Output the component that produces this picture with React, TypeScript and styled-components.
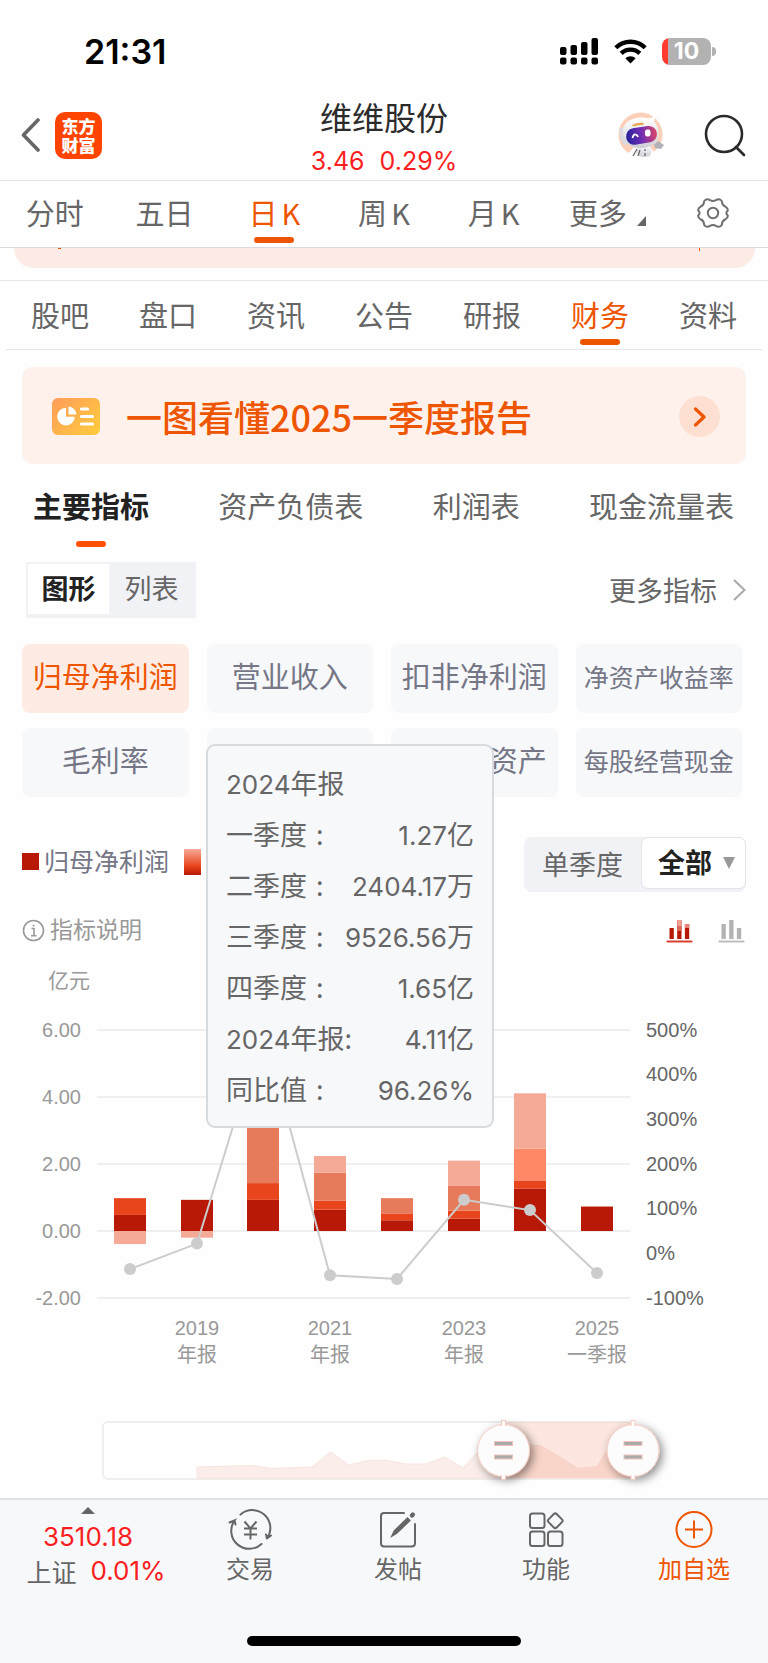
import React, { useState } from "react";
import styled, { createGlobalStyle, css } from "styled-components";

const cjk = '"Noto Sans CJK SC", sans-serif';
const numeric = '"Liberation Sans", "Noto Sans CJK SC", sans-serif';
const system = 'Inter, "Noto Sans CJK SC", sans-serif';

const color = {
  accent: "#ee5500",
  up: "#fa1e1e",
  text: "#2b2b2b",
  muted: "#666666",
  faint: "#999999",
  chip: "#757686",
  line: "#e6e6e8",
  surface: "#f7f8fa",
  segment: "#f1f2f5",
};

const GlobalStyle = createGlobalStyle`
  * { box-sizing: border-box; }
  body { margin: 0; background: #fefefe; font-family: ${cjk}; color: ${color.muted}; }
  button, select { font-family: inherit; color: inherit; background: none; border: 0; padding: 0; margin: 0; cursor: pointer; }
  a { color: inherit; text-decoration: none; }
  svg { display: block; }
`;

const Page = styled.div`
  display: flex;
  flex-direction: column;
  min-height: 100vh;
`;

/* ---------- status bar ---------- */

const StatusBar = styled.div`
  display: flex;
  align-items: center;
  justify-content: space-between;
  height: 102px;
  padding: 0 52px 0 84px;
`;

const Clock = styled.time`
  padding-top: 2px;
  font: 600 34px/40px ${system};
  color: #000;
`;

const StatusIcons = styled.div`
  display: flex;
  align-items: center;
  gap: 15px;
`;

const Battery = styled.div`
  display: flex;
  align-items: center;
  gap: 1px;
`;

const BatteryBody = styled.div`
  width: 49px;
  height: 27px;
  border-radius: 8px;
  background: linear-gradient(90deg, #ff3b30 6px, #b2b2b2 6px);
  color: #fff;
  text-align: center;
  font: 700 23px/27px ${system};
`;

const BatteryTip = styled.div`
  width: 4px;
  height: 9px;
  border-radius: 0 4px 4px 0;
  background: #b2b2b2;
`;

/* ---------- header ---------- */

const Header = styled.header`
  display: grid;
  grid-template-columns: 1fr auto 1fr;
  height: 79px;
  padding: 0 21px;
  border-bottom: 1px solid ${color.line};
`;

const HeaderSide = styled.div<{ $end?: boolean }>`
  display: flex;
  align-items: center;
  gap: ${(p) => (p.$end ? 40 : 15)}px;
  justify-content: ${(p) => (p.$end ? "flex-end" : "flex-start")};
  padding-bottom: 12px;
`;

const BrandLogo = styled.a`
  display: grid;
  place-content: center;
  width: 47px;
  height: 47px;
  border-radius: 10px;
  background: #ff4400;
  color: #fff;
  text-align: center;
  font: 900 17px/19px ${cjk};
`;

const Stock = styled.div`
  text-align: center;
`;

const StockName = styled.h1`
  margin: 0;
  font: 400 32px/28px ${cjk};
  color: ${color.text};
`;

const StockQuote = styled.div`
  display: flex;
  justify-content: center;
  gap: 15px;
  margin-top: 14px;
  font: 400 25px/34px ${system};
  color: ${color.up};
`;

/* ---------- tab bars ---------- */

const PeriodTabs = styled.nav`
  display: grid;
  grid-template-columns: repeat(7, 1fr);
  height: 67px;
  border-bottom: 1px solid #d9dadd;
`;

const SectionFrame = styled.div`
  margin-top: 12px;
  padding: 0 6px;
  border-top: 1px solid ${color.line};
`;

const SectionTabs = styled.nav`
  display: grid;
  grid-template-columns: repeat(7, 1fr);
  height: 69px;
  border-bottom: 1px solid ${color.line};
`;

const Tab = styled.button<{ $active?: boolean }>`
  display: flex;
  flex-direction: column;
  align-items: center;
  justify-content: flex-end;
  gap: 5px;
  padding-bottom: 4px;
  font-size: 29px;
  line-height: 40px;
  color: ${(p) => (p.$active ? color.accent : color.muted)};
  &::after {
    content: "";
    width: 40px;
    height: 6px;
    border-radius: 3px;
    background: ${(p) => (p.$active ? color.accent : "transparent")};
  }
`;

const MoreTab = styled(Tab)`
  padding-left: 8px;
`;

const TabLabel = styled.span`
  display: flex;
  gap: 4px;
`;

const CornerMark = styled.svg`
  align-self: flex-end;
  margin: 0 0 6px 6px;
`;

const SettingsButton = styled.button`
  display: grid;
  place-items: center;
  padding-bottom: 2px;
`;

const PeekCard = styled.div`
  display: flex;
  justify-content: space-between;
  height: 20px;
  margin: 0 13px 0 14px;
  padding: 0 55px 0 44px;
  border-radius: 0 0 27px 27px;
  background: #fdece6;
`;

const PeekMark = styled.i<{ $tall?: boolean }>`
  width: ${(p) => (p.$tall ? 1 : 3)}px;
  height: ${(p) => (p.$tall ? 3 : 1)}px;
  background: ${color.accent};
`;

/* ---------- banner ---------- */

const Banner = styled.a`
  display: flex;
  align-items: center;
  height: 97px;
  margin: 17px 22px 0;
  padding: 2px 26px 0 30px;
  border-radius: 10px;
  background: #fef1eb;
  color: ${color.accent};
`;

const BannerTitle = styled.span`
  flex: 1;
  padding: 0 0 2px 26px;
  font: 500 36px/48px ${cjk};
`;

const BannerArrow = styled.span`
  display: grid;
  place-items: center;
  width: 41px;
  height: 41px;
  border-radius: 50%;
  background: #fde0d2;
`;

/* ---------- statement tabs ---------- */

const StatementTabs = styled.nav`
  display: flex;
  justify-content: space-between;
  padding: 21px 34px 15px 33px;
`;

const StatementTab = styled.button<{ $active?: boolean }>`
  display: flex;
  flex-direction: column;
  align-items: center;
  gap: 16px;
  font-size: 29px;
  line-height: 40px;
  font-weight: ${(p) => (p.$active ? 700 : 400)};
  color: ${(p) => (p.$active ? "#222" : color.muted)};
  &::after {
    content: "";
    width: 30px;
    height: 6px;
    border-radius: 3px;
    background: ${(p) => (p.$active ? "#ff5000" : "transparent")};
  }
`;

/* ---------- indicator panel ---------- */

const Panel = styled.main`
  position: relative;
  flex: 1;
`;

const ViewRow = styled.div`
  display: flex;
  align-items: center;
  justify-content: space-between;
  height: 56px;
  padding: 0 22px 0 26px;
`;

const ViewSwitch = styled.div`
  display: grid;
  grid-template-columns: 81px 85px;
  height: 56px;
  padding: 2px 2px 4px;
  background: ${color.segment};
`;

const ViewOption = styled.button<{ $active?: boolean }>`
  padding-bottom: 2px;
  font-size: 27px;
  line-height: 46px;
  ${(p) =>
    p.$active &&
    css`
      background: #fff;
      color: #222;
      font-weight: 700;
    `}
`;

const MoreLink = styled.a`
  display: flex;
  align-items: center;
  gap: 16px;
  font-size: 27px;
  line-height: 40px;
`;

const Chips = styled.div`
  display: grid;
  grid-template-columns: repeat(4, 1fr);
  gap: 15px 18px;
  padding: 26px 26px 0 22px;
`;

const Chip = styled.button<{ $active?: boolean; $small?: boolean }>`
  height: 69px;
  padding-bottom: ${(p) => (p.$small ? 5 : 7)}px;
  border-radius: 8px;
  white-space: nowrap;
  font-size: ${(p) => (p.$small ? 25 : 29)}px;
  line-height: 40px;
  background: ${(p) => (p.$active ? "#feece4" : color.surface)};
  color: ${(p) => (p.$active ? color.accent : color.chip)};
`;

const LegendRow = styled.div`
  display: flex;
  align-items: center;
  justify-content: space-between;
  height: 55px;
  margin-top: 40px;
  padding: 0 22px;
`;

const Legend = styled.div`
  display: flex;
  align-items: center;
  padding-bottom: 6px;
  font-size: 25px;
  line-height: 36px;
  color: ${color.chip};
`;

const LegendLabel = styled.span`
  padding: 0 15px 3px 5px;
`;

const Swatch = styled.i<{ $gradient?: boolean }>`
  width: 17px;
  height: ${(p) => (p.$gradient ? 26 : 17)}px;
  background: ${(p) =>
    p.$gradient ? "linear-gradient(#f4aa97, #e8451c 65%, #b81806)" : "#b81806"};
`;

const RangeSwitch = styled.div`
  display: flex;
  width: 222px;
  height: 55px;
  border-radius: 8px;
  background: ${color.segment};
`;

const QuarterButton = styled.button`
  flex: 1;
  padding-bottom: 1px;
  font-size: 27px;
  line-height: 40px;
`;

const ScopePicker = styled.label`
  display: flex;
  align-items: center;
  width: 105px;
  height: 52px;
  padding: 0 10px 0 16px;
  border: 1px solid #e3e4e8;
  border-radius: 7px;
  background: #fff;
`;

const ScopeSelect = styled.select`
  appearance: none;
  flex: 1;
  min-width: 0;
  height: 48px;
  padding-bottom: 2px;
  font-size: 27px;
  line-height: 44px;
  font-weight: 700;
  color: #222;
`;

const InfoRow = styled.div`
  display: flex;
  align-items: center;
  justify-content: space-between;
  height: 40px;
  margin-top: 18px;
  padding: 0 23px 0 22px;
`;

const InfoButton = styled.button`
  display: flex;
  align-items: center;
  gap: 5px;
  font-size: 23px;
  line-height: 36px;
  color: ${color.faint};
`;

const InfoText = styled.span`
  padding-bottom: 4px;
`;

const StyleIcons = styled.div`
  display: flex;
  gap: 25px;
  padding-top: 3px;
`;

const IconButton = styled.button`
  display: block;
`;

/* ---------- tooltip ---------- */

const Tooltip = styled.div`
  position: absolute;
  top: 182px;
  left: 206px;
  width: 288px;
  padding: 11px 18px 12px;
  border: 2px solid #d7dade;
  border-radius: 9px;
  background: ${color.surface};
  font: 400 27px/51px ${cjk};
`;

const TipRow = styled.div`
  display: flex;
  justify-content: space-between;
  height: 51px;
  white-space: nowrap;
`;

const Num = styled.span`
  font-family: ${system};
  font-size: 26px;
  line-height: 1;
`;

const Colon = styled.span`
  padding-left: 9px;
`;

/* ---------- chart ---------- */

const ChartSvg = styled.svg`
  width: 100%;
  height: auto;
  text {
    font-family: ${numeric};
    font-size: 20px;
    fill: ${color.faint};
  }
`;

const ZoomBar = styled.div`
  position: relative;
`;

const ZoomInput = styled.input`
  position: absolute;
  inset: 24px 17% 20px 13%;
  width: 70%;
  height: 54px;
  margin: 0;
  opacity: 0;
`;

/* ---------- bottom bar ---------- */

const BottomBar = styled.footer`
  height: 165px;
  border-top: 2px solid #dfe1e4;
  background: ${color.surface};
`;

const BottomItems = styled.div`
  display: grid;
  grid-template-columns: 176fr 148fr 148fr 148fr 148fr;
  height: 136px;
`;

const IndexQuote = styled.a`
  display: flex;
  flex-direction: column;
  align-items: center;
  padding-top: 7px;
  font: 400 26px/34px ${system};
  color: ${color.up};
`;

const IndexValue = styled.span`
  padding-top: 6px;
`;

const IndexName = styled.span`
  font: 400 25px/34px ${cjk};
  color: ${color.muted};
`;

const IndexRow = styled.span`
  display: flex;
  align-items: center;
  gap: 14px;
  padding-left: 16px;
`;

const NavItem = styled.button<{ $accent?: boolean }>`
  display: flex;
  flex-direction: column;
  align-items: center;
  padding-top: 9px;
  font-size: 24px;
  line-height: 34px;
  color: ${(p) => (p.$accent ? color.accent : color.muted)};
`;

const HomeIndicator = styled.div`
  width: 274px;
  height: 10px;
  margin: 0 auto;
  border-radius: 5px;
  background: #000;
`;

/* ---------- icons ---------- */

const SignalIcon = () => (
  <svg width="39" height="27" viewBox="0 0 39 27">
    {[
      [0, 9, 8],
      [10.5, 7, 10],
      [21, 4, 13],
      [31.5, 0, 17],
    ].map(([x, y, h]) => (
      <g key={x}>
        <rect x={x} y={y} width="6.5" height={h} rx="2" />
        <rect x={x} y="19.5" width="6.5" height="7" rx="2" />
      </g>
    ))}
  </svg>
);

const WifiIcon = () => (
  <svg width="33" height="25" viewBox="0 0 33 25" fill="none" stroke="#000" strokeWidth="4.4">
    <path d="M1.8 8.8a21 21 0 0 1 29.4 0" />
    <path d="M7.2 14.4a13.4 13.4 0 0 1 18.6 0" />
    <path d="M16.500 24.500l-5.200-5.200a7.400 7.400 0 0 1 10.400 0z" fill="#000" stroke="none" />
  </svg>
);

const RobotIcon = () => (
  <svg width="46" height="46" viewBox="0 0 46 46">
    <defs>
      <linearGradient id="visor" x1="0" y1="0" x2="1" y2="0">
        <stop offset="0" stopColor="#28219b" />
        <stop offset="0.5" stopColor="#6f2fb4" />
        <stop offset="1" stopColor="#dd4668" />
      </linearGradient>
      <linearGradient id="shell" x1="0" y1="0" x2="0" y2="1">
        <stop offset="0" stopColor="#ffffff" />
        <stop offset="1" stopColor="#cfd0d6" />
      </linearGradient>
    </defs>
    <circle cx="22.500" cy="22.500" r="22" fill="#fcd0b8" />
    <path d="M30 5q5 3 6-3 2 8-2 9z" fill="#fff" />
    <path d="M8 44l8-9h16l7 8-8 3H14z" fill="#fff" />
    <path d="M18 33h13l3 5-2 6q-6 2-11 0l-3-4z" fill="url(#shell)" />
    <path d="M19 37l-4 7M22 38l-2 6M27 37v2M27 41v3" stroke="#6d6670" strokeWidth="1.300" />
    <path d="M1 17l5-2 4 17-4 1q-5-7-5-16z" fill="#dcdae0" />
    <path d="M5 21C4 11 13 6 22 5.500S38 8 40 17s0 16-12 18.500S6 33 5 21z" fill="url(#shell)" />
    <path d="M14 13q6-3 12-2l-1 2q-5-.5-10 1.500z" fill="#e8a44d" />
    <rect x="8" y="15" width="31" height="16.500" rx="8" fill="url(#visor)" transform="rotate(-9 24 23)" />
    <path d="M14.500 26q1-4 3-3.500t2.500 2.500" fill="none" stroke="#fff" strokeWidth="1.800" />
    <rect x="27" y="17.500" width="5.500" height="7" rx="2.200" fill="#fff" />
    <path d="M36 33l4-4 6 4-3 4-6-1z" fill="#b3b2ba" />
  </svg>
);

const GearIcon = () => (
  <svg width="32" height="32" viewBox="0 0 32 32" fill="none" stroke="#707070" strokeWidth="2">
    <path d="M13 3.200Q16 5 19 3.200Q21.500 1.500 23.800 3Q24.800 3.700 25 5Q25.200 8.700 28.600 9.800Q31 11 30.800 13.500Q28 16 30.800 18.500Q31 21 28.600 22.200Q25.200 23.300 25 27Q24.800 28.300 23.800 29Q21.500 30.500 19 28.800Q16 27 13 28.800Q10.500 30.500 8.200 29Q7.200 28.300 7 27Q6.800 23.300 3.400 22.200Q1 21 1.200 18.500Q4 16 1.200 13.500Q1 11 3.400 9.800Q6.800 8.700 7 5Q7.200 3.700 8.200 3Q10.500 1.500 13 3.200Z" strokeLinejoin="round" />
    <circle cx="16" cy="16" r="5.200" />
  </svg>
);

const ReportIcon = () => (
  <svg width="48" height="37" viewBox="0 0 48 37">
    <defs>
      <linearGradient id="report" x1="0" y1="0" x2="1" y2="0.8">
        <stop offset="0" stopColor="#ff9c5b" />
        <stop offset="1" stopColor="#ffc83e" />
      </linearGradient>
    </defs>
    <rect width="48" height="37" rx="6" fill="url(#report)" />
    <path d="M14 9.800A8.800 8.800 0 1 0 22.800 18.800H14z" fill="#fff" />
    <path d="M16.500 8.500v8h7.800a8 8 0 0 0-7.800-8z" fill="#fff" />
    <path d="M29.500 11h6M29.500 18.500h11M29.500 26h11" stroke="#fff" strokeWidth="3.200" strokeLinecap="round" />
  </svg>
);

const BarsIcon = ({ tone }: { tone: "red" | "gray" }) => {
  const red = tone === "red";
  const base = red ? "#d8402e" : "#bdbdbd";
  const bar = red ? "#b81806" : "#b3b3b3";
  const heights = red ? [11, 19, 15] : [15, 19, 11];
  return (
    <svg width="27" height="24" viewBox="0 0 27 24">
      {heights.map((h, i) => (
        <rect key={i} x={3.500 + i * 7.700} y={19 - h} width="4.300" height={h} fill={bar} />
      ))}
      {red && (
        <>
          <rect x="11.200" y="0" width="4.300" height="6" fill="#f0a091" />
          <rect x="11.200" y="6" width="4.300" height="5" fill="#dd6a58" />
          <rect x="18.900" y="4" width="4.300" height="4" fill="#e58474" />
        </>
      )}
      <path d="M1.500 21.500h24" stroke={base} strokeWidth="2.200" strokeLinecap="round" />
    </svg>
  );
};

const TradeIcon = () => (
  <svg width="44" height="42" viewBox="0 0 44 42" fill="none" stroke="currentColor" strokeWidth="2" strokeLinecap="round">
    <path d="M12.500 5.500A18 18 0 0 1 39 29.500l4-3M39 29.500l-1-4" />
    <path d="M33.500 35A18 18 0 0 1 6.500 11.500L1.500 13.500M6.500 11.500l1 4" />
    <path d="M16.500 12.500l6 7 6-7M22.500 19.500v11M16 19.500h13M16 25.500h13" strokeLinecap="butt" />
  </svg>
);

const PostIcon = () => (
  <svg width="38" height="42" viewBox="0 0 38 42" fill="none" stroke="currentColor" strokeWidth="2" strokeLinecap="round">
    <path d="M25 4H5Q2 4 2 7V34Q2 37.500 5 37.500H32.500Q36 37.500 36 34V15" />
    <path d="M13.500 26.500l2-4.500L28.500 9.500l2 2L17.500 24z" fill="currentColor" />
    <path d="M33 6.500l.8-.8" strokeWidth="4.500" />
  </svg>
);

const AppsIcon = () => (
  <svg width="36" height="42" viewBox="0 0 36 42" fill="none" stroke="currentColor" strokeWidth="2">
    <rect x="2" y="4.500" width="14.500" height="14.500" rx="2.500" />
    <rect x="2" y="22.500" width="14.500" height="14.500" rx="2.500" />
    <rect x="20" y="22.500" width="14.500" height="14.500" rx="2.500" />
    <rect x="21.500" y="6" width="11.500" height="11.500" rx="2" transform="rotate(45 27.250 11.750)" />
  </svg>
);

const AddIcon = () => (
  <svg width="38" height="42" viewBox="0 0 38 42" fill="none" stroke="currentColor" strokeWidth="2">
    <circle cx="19" cy="20.500" r="17.500" />
    <path d="M19 11.500v18M10 20.500h18" />
  </svg>
);

/* ---------- data ---------- */

const periods = ["分时", "五日", "日K", "周K", "月K"];
const sections = ["股吧", "盘口", "资讯", "公告", "研报", "财务", "资料"];
const statements = ["主要指标", "资产负债表", "利润表", "现金流量表"];
const metricsTop = ["归母净利润", "营业收入", "扣非净利润", "净资产收益率", "毛利率"];
const metricsRest = ["每股净资产", "每股经营现金"];

const tip = [
  { name: "一季度", value: "1.27", unit: "亿" },
  { name: "二季度", value: "2404.17", unit: "万" },
  { name: "三季度", value: "9526.56", unit: "万" },
  { name: "四季度", value: "1.65", unit: "亿" },
  { year: "2024", name: "年报", value: "4.11", unit: "亿" },
  { name: "同比值", value: "96.26%", unit: "" },
];

const shades = ["#b81806", "#e8451c", "#e77a5b", "#f4aa97"];
const highlighted = "#ff8866";

const years = [
  { year: 2018, parts: [0.48, 0.5, 0, -0.39], growth: -36 },
  { year: 2019, parts: [0.93, 0, 0, -0.2], growth: 21, label: "年报" },
  { year: 2020, parts: [0.93, 0.5, 1.9, 0.9], growth: 501 },
  { year: 2021, parts: [0.64, 0.27, 0.83, 0.5], growth: -50, label: "年报" },
  { year: 2022, parts: [0.32, 0.19, 0.47, 0], growth: -58 },
  { year: 2023, parts: [0.37, 0.24, 0.75, 0.74], growth: 119, label: "年报" },
  { year: 2024, parts: [1.27, 0.24, 0.95, 1.65], growth: 96, active: true },
  { year: 2025, parts: [0.73, 0, 0, 0], growth: -45, label: "一季报" },
];

const zeroY = 281;
const unit = 33.5;
const centerX = (i: number) => Math.round(130 + i * 66.7);
const growthY = (g: number) => 303 - g * 0.447;

function ProfitChart() {
  return (
    <ChartSvg viewBox="0 0 768 450" role="img" aria-label="归母净利润">
      <text x="48" y="38" style={{ fontSize: 21 }}>亿元</text>
      {[6, 4, 2, 0, -2].map((v) => {
        const y = Math.round(zeroY - v * unit);
        return (
          <g key={v}>
            <path d={`M97 ${y}H630`} stroke="#efefef" strokeWidth="2" />
            <text x="81" y={y + 7} textAnchor="end">{v.toFixed(2)}</text>
          </g>
        );
      })}
      {[500, 400, 300, 200, 100, 0, -100].map((g) => (
        <text key={g} x="646" y={growthY(g) + 7} style={{ fill: color.muted }}>{g}%</text>
      ))}
      {years.map(({ year, parts, active }, i) => {
        let top = zeroY;
        return parts.map((v, q) => {
          if (!v) return null;
          const h = Math.abs(v) * unit;
          if (v > 0) top -= h;
          return (
            <rect
              key={`${year}-${q}`}
              x={centerX(i) - 16}
              y={v > 0 ? top : zeroY}
              width="32"
              height={h}
              fill={active && q === 2 ? highlighted : shades[q]}
            />
          );
        });
      })}
      <polyline
        points={years.map((d, i) => `${centerX(i)},${growthY(d.growth)}`).join(" ")}
        fill="none"
        stroke="#cccccc"
        strokeWidth="2"
      />
      {years.map((d, i) => (
        <circle key={d.year} cx={centerX(i)} cy={growthY(d.growth)} r="6" fill="#cccccc" />
      ))}
      {years.map(
        (d, i) =>
          d.label && (
            <g key={d.year}>
              <text x={centerX(i)} y="385" textAnchor="middle">{d.year}</text>
              <text x={centerX(i)} y="412" textAnchor="middle">{d.label}</text>
            </g>
          )
      )}
    </ChartSvg>
  );
}

const Handle = ({ x }: { x: number }) => (
  <g>
    <circle cx={x} cy="50.500" r="26" fill="#fcfcfc" stroke="#f3c9be" filter="url(#handleShadow)" />
    <path d={`M${x} 20V26M${x} 75V80`} stroke="#f3c9be" strokeWidth="5" />
    <path d={`M${x} 21V27M${x} 74V79`} stroke="#fff" strokeWidth="3" />
    <rect x={x - 9} y="41.500" width="18" height="4" fill="#aaaaaa" stroke="#f0c4b9" />
    <rect x={x - 9} y="55" width="18" height="4" fill="#aaaaaa" stroke="#f0c4b9" />
  </g>
);

function RangeZoom() {
  return (
    <ZoomBar>
      <ChartSvg viewBox="0 0 768 98" aria-hidden="true">
        <defs>
          <filter id="handleShadow" x="-50%" y="-50%" width="200%" height="200%">
            <feDropShadow dx="3" dy="3" stdDeviation="5" floodColor="#000" floodOpacity="0.45" />
          </filter>
        </defs>
        <rect x="103" y="22" width="530" height="57" rx="5" fill="#fff" stroke="#eeeeee" strokeWidth="2" />
        <path
          d="M197 78V67L253 65.500L272 68.500L312 67L330.500 52L349 65L368 60.500H387L406 64H426L444.500 57L463 68L480 50L500 38L520 44L540 45.500L560 57L578 68.500L597 66.500L610 46L633 34V78z"
          fill="#fbeeea"
          stroke="#f9e3dd"
        />
        <rect x="503" y="22" width="130" height="56" fill="#f6b9a6" fillOpacity="0.36" />
        <path d="M503 78V38L520 44L540 45.500L560 57L578 68.500L597 66.500L610 46L633 34V78z" fill="#f9c3b3" fillOpacity="0.3" />
        <Handle x={503.5} />
        <Handle x={633} />
      </ChartSvg>
      <ZoomInput type="range" min={0} max={100} defaultValue={75} aria-label="开始" />
      <ZoomInput type="range" min={0} max={100} defaultValue={100} aria-label="结束" />
    </ZoomBar>
  );
}

export default function App() {
  const [period, setPeriod] = useState("日K");
  const [section, setSection] = useState("财务");
  const [statement, setStatement] = useState("主要指标");
  const [metric, setMetric] = useState("归母净利润");

  const renderChip = (m: string) => (
    <Chip key={m} $active={m === metric} $small={m.length > 5} onClick={() => setMetric(m)}>{m}</Chip>
  );

  return (
    <Page>
      <GlobalStyle />
      <StatusBar>
        <Clock>21:31</Clock>
        <StatusIcons>
          <SignalIcon />
          <WifiIcon />
          <Battery>
            <BatteryBody>10</BatteryBody>
            <BatteryTip />
          </Battery>
        </StatusIcons>
      </StatusBar>

      <Header>
        <HeaderSide>
          <IconButton aria-label="返回">
            <svg width="19" height="34" viewBox="0 0 19 34" fill="none" stroke="#666" strokeWidth="3.6" strokeLinecap="round" strokeLinejoin="round">
              <path d="M17 2L2.500 17L17 32" />
            </svg>
          </IconButton>
          <BrandLogo href="#home">东方<br />财富</BrandLogo>
        </HeaderSide>
        <Stock>
          <StockName>维维股份</StockName>
          <StockQuote>
            <span>3.46</span>
            <span>0.29%</span>
          </StockQuote>
        </Stock>
        <HeaderSide $end>
          <IconButton aria-label="智能助手"><RobotIcon /></IconButton>
          <IconButton aria-label="搜索">
            <svg width="43" height="43" viewBox="0 0 43 43" fill="none" stroke="#2b2b2b" strokeWidth="2.6">
              <circle cx="20" cy="20" r="18" />
              <path d="M32 33l8 8" strokeLinecap="round" />
            </svg>
          </IconButton>
        </HeaderSide>
      </Header>

      <PeriodTabs>
        {periods.map((p) => (
          <Tab key={p} $active={p === period} onClick={() => setPeriod(p)}>
            <TabLabel>
              {p.endsWith("K") ? (
                <>
                  <span>{p[0]}</span>
                  <span>K</span>
                </>
              ) : (
                p
              )}
            </TabLabel>
          </Tab>
        ))}
        <MoreTab>
          <TabLabel>
            更多
            <CornerMark width="9" height="10" viewBox="0 0 9 10">
              <path d="M9 0V10H0z" fill="#666" />
            </CornerMark>
          </TabLabel>
        </MoreTab>
        <SettingsButton aria-label="设置"><GearIcon /></SettingsButton>
      </PeriodTabs>

      <PeekCard>
        <PeekMark />
        <PeekMark $tall />
      </PeekCard>

      <SectionFrame>
        <SectionTabs>
          {sections.map((s) => (
            <Tab key={s} $active={s === section} onClick={() => setSection(s)}>{s}</Tab>
          ))}
        </SectionTabs>
      </SectionFrame>

      <Banner href="#report">
        <ReportIcon />
        <BannerTitle>一图看懂2025一季度报告</BannerTitle>
        <BannerArrow>
          <svg width="13" height="20" viewBox="0 0 13 20" fill="none" stroke={color.accent} strokeWidth="3.2" strokeLinecap="round" strokeLinejoin="round">
            <path d="M2.500 2L11 10L2.500 18" />
          </svg>
        </BannerArrow>
      </Banner>

      <StatementTabs>
        {statements.map((s) => (
          <StatementTab key={s} $active={s === statement} onClick={() => setStatement(s)}>{s}</StatementTab>
        ))}
      </StatementTabs>

      <Panel>
        <ViewRow>
          <ViewSwitch>
            <ViewOption $active>图形</ViewOption>
            <ViewOption>列表</ViewOption>
          </ViewSwitch>
          <MoreLink href="#metrics">
            更多指标
            <svg width="13" height="22" viewBox="0 0 13 22" fill="none" stroke="#aaa" strokeWidth="2">
              <path d="M1 1L11.500 11L1 21" />
            </svg>
          </MoreLink>
        </ViewRow>

        <Chips>
          {metricsTop.map(renderChip)}
          <Chip aria-label="净利率" />
          {metricsRest.map(renderChip)}
        </Chips>

        <LegendRow>
          <Legend>
            <Swatch />
            <LegendLabel>归母净利润</LegendLabel>
            <Swatch $gradient />
          </Legend>
          <RangeSwitch>
            <QuarterButton>单季度</QuarterButton>
            <ScopePicker>
              <ScopeSelect aria-label="报告期">
                <option>全部</option>
              </ScopeSelect>
              <svg width="12" height="12" viewBox="0 0 12 12"><path d="M0 0H12L6 12z" fill="#999" /></svg>
            </ScopePicker>
          </RangeSwitch>
        </LegendRow>

        <InfoRow>
          <InfoButton>
            <svg width="23" height="23" viewBox="0 0 23 23" fill="none" stroke="#999" strokeWidth="1.600">
              <circle cx="11.500" cy="11.500" r="10" />
              <path d="M9.500 9.500h2.500v7M9 16.800h5.500" />
              <circle cx="11.500" cy="6.500" r="1" fill="#999" stroke="none" />
            </svg>
            <InfoText>指标说明</InfoText>
          </InfoButton>
          <StyleIcons>
            <IconButton aria-label="堆叠柱状图"><BarsIcon tone="red" /></IconButton>
            <IconButton aria-label="柱状图"><BarsIcon tone="gray" /></IconButton>
          </StyleIcons>
        </InfoRow>

        <ProfitChart />
        <RangeZoom />

        <Tooltip role="tooltip">
          <TipRow>
            <span><Num>2024</Num>年报</span>
          </TipRow>
          {tip.map((t) => (
            <TipRow key={t.name}>
              <span>
                {t.year && <Num>{t.year}</Num>}
                {t.name}
                {t.year ? ":" : <Colon>:</Colon>}
              </span>
              <span>
                <Num>{t.value}</Num>
                {t.unit}
              </span>
            </TipRow>
          ))}
        </Tooltip>
      </Panel>

      <BottomBar>
        <BottomItems>
          <IndexQuote href="#index">
            <svg width="14" height="7" viewBox="0 0 14 7"><path d="M7 0L14 7H0z" fill="#666" /></svg>
            <IndexValue>3510.18</IndexValue>
            <IndexRow>
              <IndexName>上证</IndexName>
              <span>0.01%</span>
            </IndexRow>
          </IndexQuote>
          <NavItem><TradeIcon />交易</NavItem>
          <NavItem><PostIcon />发帖</NavItem>
          <NavItem><AppsIcon />功能</NavItem>
          <NavItem $accent><AddIcon />加自选</NavItem>
        </BottomItems>
        <HomeIndicator />
      </BottomBar>
    </Page>
  );
}
